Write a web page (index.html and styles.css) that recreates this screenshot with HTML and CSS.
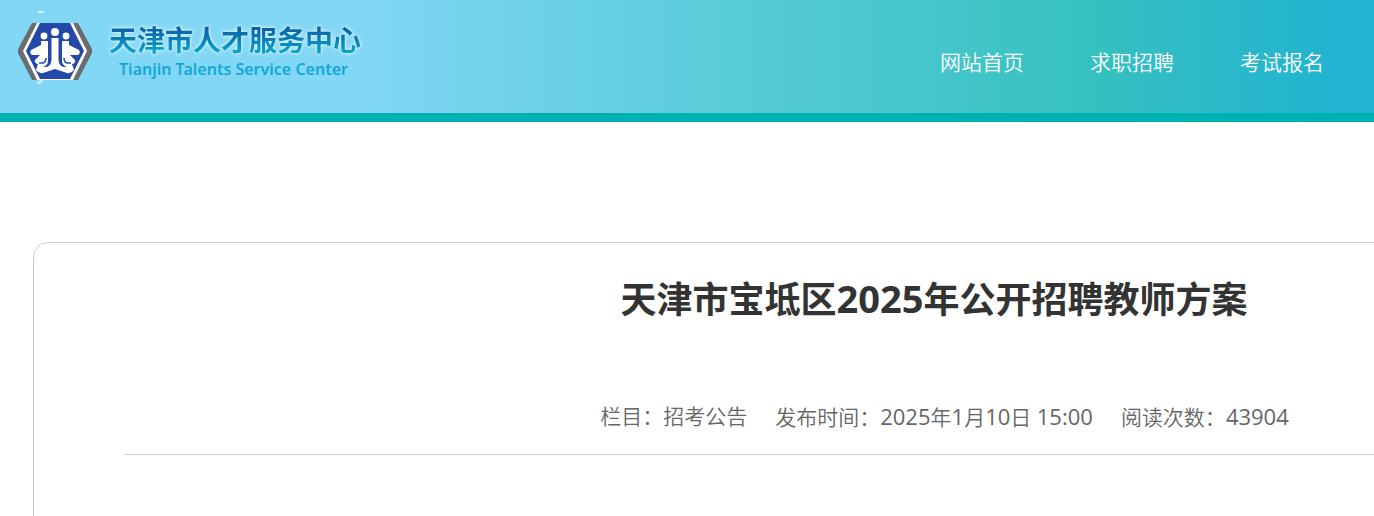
FILE: index.html
```html
<!DOCTYPE html>
<html lang="zh-CN">
<head>
<meta charset="utf-8">
<title>天津市宝坻区2025年公开招聘教师方案</title>
<link rel="stylesheet" href="styles.css">
</head>
<body>
<header class="site-header">
  <a class="brand" href="#">
    <svg class="brand-mark" viewBox="0 0 76 76" aria-hidden="true">
      <path d="M19 13H57L74 41L57 70H19L2 41Z" fill="#fff"/>
      <path d="M15 13H20L6 41L20 70H15L1 43V39Z" fill="#6a6c70"/>
      <path d="M56 13H61L75 39V43L61 70H56L70 41Z" fill="#6a6c70"/>
      <path d="M23 13H53L67 41L53 69H23L9 41Z" fill="#2448a8"/>
      <path d="M22 2h4M21 73l4-2" stroke="#d9f3fc" stroke-width="2" stroke-linecap="round" fill="none"/>
      <g fill="#fff">
        <circle cx="38" cy="22" r="4"/>
        <circle cx="27" cy="26" r="3.4"/>
        <circle cx="49" cy="26" r="3.4"/>
        <path d="M24 31H31V51Q31 55 26 57Q34 58 34.500 50V28H41.500V50Q42 58 50 57Q45 55 45 51V31H52V35L62 40Q64 43 61 45H53L58 50Q59 53 55 54L57 60Q54 64 50 63L38 59L26 63Q22 64 19 60L21 54Q17 53 18 50L23 45H15Q12 43 14 40L24 35Z"/>
      </g>
      <path d="M22 53H26Q29 52 29 48M54 53H50Q47 52 47 48" stroke="#2448a8" stroke-width="1.500" fill="none"/>
    </svg>
    <span class="brand-text">
      <span class="brand-name">天津市人才服务中心</span>
      <span class="brand-sub">Tianjin Talents Service Center</span>
    </span>
  </a>
  <nav class="site-nav">
    <a href="#">网站首页</a>
    <a href="#">求职招聘</a>
    <a href="#">考试报名</a>
  </nav>
</header>
<main class="page">
  <article class="notice">
    <h1 class="notice-title">天津市宝坻区<span class="year">2025</span>年公开招聘教师方案</h1>
    <div class="notice-meta">
      <span>栏目：招考公告</span>
      <span>发布时间：<span class="num">2025</span>年<span class="num">1</span>月<span class="num">10</span>日 <span class="num">15:00</span></span>
      <span>阅读次数：<span class="num">43904</span></span>
    </div>
  </article>
</main>
</body>
</html>
```
FILE: styles.css
```css
* {
  box-sizing: border-box;
}

body {
  margin: 0;
  background: #fff;
  color: #333;
  font-family: "Open Sans", "Noto Sans CJK SC", sans-serif;
  overflow: hidden;
}

a {
  color: inherit;
  text-decoration: none;
}

.site-header {
  display: flex;
  justify-content: space-between;
  align-items: flex-start;
  padding: 10px 50px 27px 17px;
  border-bottom: 9px solid #00b1b3;
  background: linear-gradient(90deg, #82d7f5 0%, #82d7f5 25%, #50c9d3 59%, #36c1bf 79%, #22b3d1 97%, #22b3d1 100%);
}

.brand {
  display: flex;
  gap: 16px;
}

.brand-mark {
  width: 76px;
  height: 76px;
}

.brand-text {
  display: flex;
  flex-direction: column;
  padding-top: 12px;
}

.brand-name {
  font-size: 28px;
  line-height: 36px;
  font-weight: 700;
  color: transparent;
  background: linear-gradient(#0b62a8 20%, #0aa5cf 85%);
  background-clip: text;
  -webkit-background-clip: text;
  filter: drop-shadow(0 0 1px #e2f6fd) drop-shadow(0 0 2px #c8effb);
}

.brand-sub {
  padding-left: 10px;
  font-family: "Noto Sans", sans-serif;
  font-size: 16px;
  line-height: 22px;
  font-weight: 600;
  color: #12a8d8;
}

.site-nav {
  display: flex;
  gap: 66px;
  padding-top: 37px;
  color: #fff;
  font-size: 21px;
  line-height: 30px;
  font-weight: 350;
}

.page {
  padding: 120px 0 0 33px;
}

/* The sheet runs on past the right edge of the window. */
.notice {
  margin-right: -461px;
  padding: 31px 90px 160px;
  border: 1px solid #ccc;
  border-radius: 15px;
}

.notice-title {
  margin: 0;
  font-size: 36px;
  line-height: 48px;
  font-weight: 700;
  text-align: center;
}

.year {
  font-size: 38px;
}

.notice-meta {
  display: flex;
  justify-content: center;
  gap: 28px;
  margin-top: 76px;
  padding: 0 0 21px 21px;
  border-bottom: 1px solid #ccc;
  color: #666;
  font-size: 21px;
  line-height: 32px;
  font-weight: 350;
}

.num {
  font-size: 22px;
  font-weight: 400;
}
```
